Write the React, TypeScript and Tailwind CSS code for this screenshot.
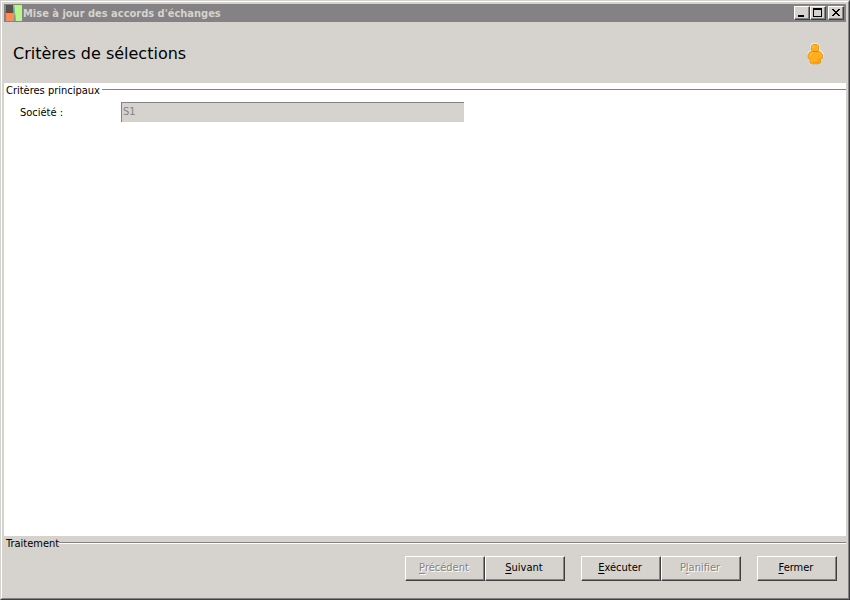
import { ReactNode } from 'react';

interface WindowButtonProps {
  label: string;
  children: ReactNode;
}

function WindowButton({ label, children }: WindowButtonProps) {
  return (
    <button
      type="button"
      aria-label={label}
      className="h-[14px] w-4 border border-t-white border-l-white border-r-[#404040] border-b-[#404040] bg-[#d6d3ce] shadow-[inset_-1px_-1px_0_#848284]"
    >
      <svg viewBox="0 0 14 12" className="block h-3 w-[14px]" shapeRendering="crispEdges" fill="#000">
        {children}
      </svg>
    </button>
  );
}

interface ActionButtonProps {
  before?: string;
  accessKey: string;
  after: string;
  disabled?: boolean;
}

function ActionButton({ before = '', accessKey, after, disabled }: ActionButtonProps) {
  return (
    <button
      type="button"
      disabled={disabled}
      className="h-[25px] w-20 border border-t-white border-l-white border-r-[#404040] border-b-[#404040] bg-[#d6d3ce] pr-[2px] text-center shadow-[inset_-1px_-1px_0_#848284] disabled:text-[#848284] disabled:[text-shadow:1px_1px_0_#fff]"
    >
      {before}
      <span className="underline underline-offset-2">{accessKey}</span>
      {after}
    </button>
  );
}

function SectionTitle({ children }: { children: ReactNode }) {
  return (
    <div className="flex items-center pl-[2px]">
      <h2 className="h-[14px] leading-4">{children}</h2>
      <div className="h-[2px] flex-1 border-t border-[#848284] bg-white" />
    </div>
  );
}

function AppLogo() {
  return (
    <svg viewBox="0 0 18 18" className="h-[18px] w-[18px] shrink-0">
      <path d="M0 0h18v18H0z" fill="#848284" />
      <path d="M2 1h7v8H2z" fill="#575250" />
      <path d="M2 9h8v8H2z" fill="#ff8a52" />
      <path d="M10 1h8v16h-6z" fill="#b8f58a" />
      <path d="M9 1h1l2 16h-1z" fill="#7dbfa5" />
    </svg>
  );
}

function PersonIcon() {
  return (
    <svg viewBox="0 0 18 22" className="h-[22px] w-[18px]">
      <path d="M6 0h5l3 3v4l3 2 1 5-3 2v5l-2 1H5l-2-1v-5l-2-2 1-5 3-2-1-4z" fill="#eeeae0" />
      <path
        d="M7 1.5h4L12.500 3v4L11.500 8.500l3 .5 2 3v3l-2 1v4l-1.500 1H5.500l-1.500-1v-4l-2-1v-3L4 9l2.500-.5L5.500 7V3z"
        fill="#ffae1c"
        stroke="#e39a26"
      />
      <path d="M7 8.500h5" stroke="#d88410" />
      <path d="M7 5V3.500L8 2.500M4.500 12.500V11.500L6 10.500" stroke="#ffd063" fill="none" />
      <path d="M13 15.500V19.500H7" stroke="#f39318" fill="none" />
    </svg>
  );
}

export default function App() {
  return (
    <div className="flex h-screen flex-col border border-t-[#d6d3ce] border-l-[#d6d3ce] border-r-[#404040] border-b-[#404040] bg-[#d6d3ce] font-['DejaVu_Sans_Condensed','DejaVu_Sans',sans-serif] text-[11px] text-black">
      <div className="flex min-h-0 flex-1 flex-col border border-t-white border-l-white border-r-[#848284] border-b-[#848284] p-[2px]">
        <header className="flex h-[18px] shrink-0 items-center bg-[#848284] pr-[2px]">
          <AppLogo />
          <h1 className="flex-1 pt-[2px] pl-px font-bold text-[#d6d3ce]">Mise à jour des accords d'échanges</h1>
          <WindowButton label="Réduire">
            <path d="M3 8h6v2H3z" />
          </WindowButton>
          <WindowButton label="Agrandir">
            <path fillRule="evenodd" d="M2 1h9v9H2zM3 3v6h7V3z" />
          </WindowButton>
          <div className="w-[2px]" />
          <WindowButton label="Fermer la fenêtre">
            <path d="M3 2h2v1h1v1h2V3h1V2h2v1h-1v1H9v1H8v1h1v1h1v1h1v1H9V8H8V7H6v1H5v1H3V8h1V7h1V6h1V5H5V4H4V3H3z" />
          </WindowButton>
        </header>

        <div className="flex h-[61px] shrink-0 items-center justify-between pt-[2px] pr-[22px] pl-[9px]">
          <p className="font-['DejaVu_Sans',sans-serif] text-[16px]">Critères de sélections</p>
          <PersonIcon />
        </div>

        <main className="min-h-0 flex-1 bg-white">
          <SectionTitle>
            <span className="pr-[2px]">Critères principaux</span>
          </SectionTitle>
          <div className="mt-[5px] flex items-center pl-4">
            <label htmlFor="societe" className="w-[101px] pt-[2px]">
              Société :
            </label>
            <input
              id="societe"
              type="text"
              defaultValue="S1"
              disabled
              className="h-5 w-[343px] border-t border-l border-[#848284] bg-[#d6d3ce] pb-[2px] pl-px text-[#848284]"
            />
          </div>
        </main>

        <footer className="shrink-0 pb-[15px]">
          <SectionTitle>Traitement</SectionTitle>
          <div className="mt-[6px] flex justify-end gap-4 pr-[9px]">
            <div className="flex">
              <ActionButton accessKey="P" after="récédent" disabled />
              <ActionButton accessKey="S" after="uivant" />
            </div>
            <div className="flex">
              <ActionButton accessKey="E" after="xécuter" />
              <ActionButton before="P" accessKey="l" after="anifier" disabled />
            </div>
            <ActionButton accessKey="F" after="ermer" />
          </div>
        </footer>
      </div>
    </div>
  );
}
